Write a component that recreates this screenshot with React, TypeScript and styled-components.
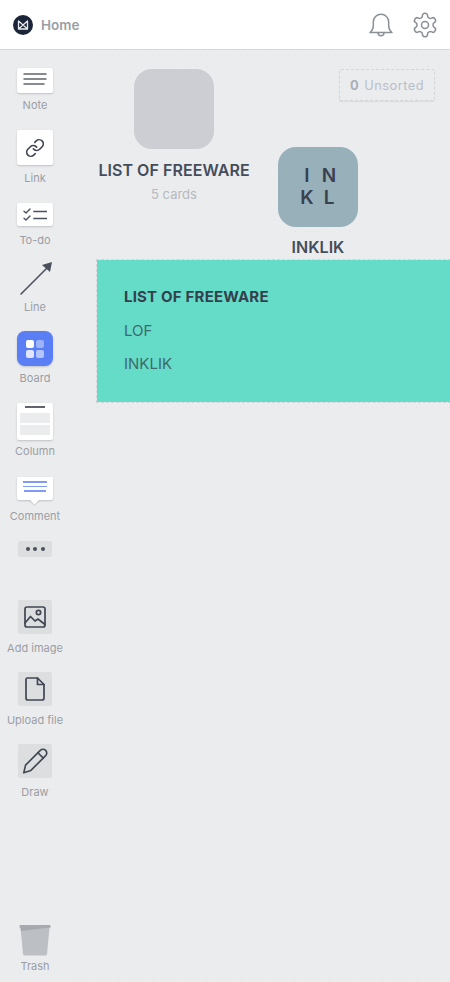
import React from "react";
import styled, { createGlobalStyle } from "styled-components";

const Global = createGlobalStyle`
  html, body { margin: 0; padding: 0; height: 100%; background: #ebecee; }
  body { font-family: Inter, "Liberation Sans", sans-serif; overflow: hidden; }
  #root { height: 100%; }
`;

const Page = styled.div`
  width: 450px;
  height: 982px;
  display: flex;
  flex-direction: column;
  overflow: hidden;
  background: #ebecee;
`;

const Header = styled.header`
  height: 49px;
  flex: none;
  display: flex;
  align-items: center;
  justify-content: space-between;
  background: #fff;
  border-bottom: 1px solid #d6d8da;
  padding: 0 11px 0 13px;
`;

const Brand = styled.div`
  display: flex;
  align-items: center;
  gap: 8px;
`;

const Logo = styled.svg`
  width: 20px;
  height: 20px;
  display: block;
`;

const HomeText = styled.span`
  font-size: 13.5px;
  font-weight: 600;
  color: #9a9ea5;
`;

const HeaderIcons = styled.div`
  display: flex;
  align-items: center;
  gap: 17px;
`;

const Body = styled.div`
  flex: 1;
  display: flex;
  min-height: 0;
`;

const Sidebar = styled.nav`
  width: 70px;
  flex: none;
  display: flex;
  flex-direction: column;
  align-items: center;
  padding: 18px 0 8px;
  box-sizing: border-box;
`;

const Tool = styled.div<{ $top: number }>`
  display: flex;
  flex-direction: column;
  align-items: center;
  margin-top: ${(p) => p.$top}px;
`;

const Label = styled.span<{ $gap: number }>`
  font-size: 11px;
  line-height: 14px;
  color: #9b9ea4;
  margin-top: ${(p) => p.$gap}px;
  margin-bottom: 1px;
  white-space: nowrap;
`;

const PaperIcon = styled.div<{ $h: number }>`
  width: 36px;
  height: ${(p) => p.$h}px;
  background: #fff;
  border-radius: 2px;
  box-shadow: 0 1px 2px rgba(90, 95, 105, 0.3);
  display: flex;
  align-items: center;
  justify-content: center;
`;

const BoardIcon = styled.div`
  width: 36px;
  height: 35px;
  border-radius: 8px;
  background: #5a7ff5;
  box-shadow: 0 1px 2px rgba(90, 95, 105, 0.3);
  display: grid;
  grid-template-columns: 8px 8px;
  grid-auto-rows: 8px;
  gap: 2px;
  align-content: center;
  justify-content: center;
`;

const BoardCell = styled.span<{ $alpha: number }>`
  border-radius: 2px;
  background: rgba(255, 255, 255, ${(p) => p.$alpha});
`;

const ColumnIcon = styled.div`
  width: 36px;
  height: 37px;
  background: #fff;
  border-radius: 2px;
  box-shadow: 0 1px 2px rgba(90, 95, 105, 0.3);
  display: flex;
  flex-direction: column;
  align-items: center;
  padding-top: 3px;
  box-sizing: border-box;
`;

const ColumnBar = styled.span`
  width: 20px;
  height: 2px;
  background: #5f646e;
  margin-bottom: 5px;
`;

const ColumnSlot = styled.span`
  width: 30px;
  height: 10px;
  background: #ebecee;
  margin-bottom: 2px;
`;

const CommentIcon = styled.div`
  position: relative;
  width: 36px;
  height: 23px;
  background: #fff;
  border-radius: 0 0 2px 2px;
  box-shadow: 0 1px 2px rgba(90, 95, 105, 0.3);
  display: flex;
  flex-direction: column;
  align-items: center;
  gap: 3px;
  padding-top: 4px;
  box-sizing: border-box;
  &::after {
    content: "";
    position: absolute;
    left: 14.5px;
    bottom: -3px;
    width: 7px;
    height: 7px;
    background: #fff;
    transform: rotate(45deg);
    box-shadow: 1px 1px 1px rgba(90, 95, 105, 0.2);
  }
`;

const CommentLine = styled.span<{ $w: number }>`
  width: ${(p) => p.$w}px;
  height: 1.5px;
  background: #7f9bf5;
`;

const MoreButton = styled.div`
  width: 34px;
  height: 16px;
  background: #dcdee0;
  border-radius: 2px;
  display: flex;
  align-items: center;
  justify-content: center;
  gap: 3.5px;
`;

const Dot = styled.span`
  width: 4px;
  height: 4px;
  border-radius: 50%;
  background: #4a505c;
`;

const GreyTile = styled.div`
  width: 34px;
  height: 34px;
  background: #dcdee0;
  border-radius: 2px;
  display: flex;
  align-items: center;
  justify-content: center;
`;

const Spacer = styled.div`
  flex: 1;
`;

const Canvas = styled.main`
  position: relative;
  flex: 1;
  background-image: radial-gradient(circle, #e1e2e5 0.7px, transparent 1px);
  background-size: 11px 11px;
`;

const UnsortedTag = styled.div`
  position: absolute;
  left: 269px;
  top: 19px;
  width: 96px;
  height: 32px;
  box-sizing: border-box;
  border: 1px dashed #d3d5d8;
  border-radius: 2px;
  box-shadow: 0 1px 1px rgba(90, 95, 105, 0.12);
  display: flex;
  align-items: center;
  justify-content: center;
  gap: 5px;
  font-size: 12.8px;
  letter-spacing: 0.5px;
  color: #b9bfca;
`;

const Strong = styled.b`
  font-weight: 700;
  color: #a9afb9;
`;

const BoardNode = styled.div<{ $x: number; $y: number; $w: number }>`
  position: absolute;
  left: ${(p) => p.$x}px;
  top: ${(p) => p.$y}px;
  width: ${(p) => p.$w}px;
  display: flex;
  flex-direction: column;
  align-items: center;
`;

const Tile = styled.div<{ $bg: string }>`
  width: 80px;
  height: 80px;
  border-radius: 18px;
  background: ${(p) => p.$bg};
  display: flex;
  align-items: center;
  justify-content: center;
`;

const TileLetters = styled.div`
  display: grid;
  grid-template-columns: 22px 22px;
  grid-auto-rows: 22px;
  font-size: 19px;
  line-height: 22px;
  font-weight: 600;
  text-align: center;
  color: #3a4150;
`;

const NodeTitle = styled.div<{ $top: number }>`
  margin-top: ${(p) => p.$top}px;
  font-size: 16px;
  line-height: 20px;
  font-weight: 600;
  letter-spacing: 0.05px;
  color: #454c5a;
  white-space: nowrap;
`;

const NodeSub = styled.div`
  margin-top: 6px;
  font-size: 13px;
  line-height: 16px;
  color: #b6b9be;
`;

const TextCard = styled.section`
  position: absolute;
  left: 27px;
  top: 210px;
  width: 353px;
  height: 142px;
  box-sizing: border-box;
  padding: 27px 27px 0;
  background: #64dcc8;
  outline: 1px dashed #d3d6d9;
  display: flex;
  flex-direction: column;
  gap: 13.5px;
`;

const CardLine = styled.div<{ $bold?: boolean }>`
  font-size: 15px;
  line-height: 20px;
  font-weight: ${(p) => (p.$bold ? 700 : 400)};
  letter-spacing: ${(p) => (p.$bold ? "0.2px" : "0")};
  color: ${(p) => (p.$bold ? "#34404c" : "#3f6a6c")};
`;

const lines = (stroke: string) => ({
  fill: "none",
  stroke,
  strokeLinecap: "round" as const,
  strokeLinejoin: "round" as const,
});

export default function App() {
  return (
    <Page>
      <Global />
      <Header>
        <Brand>
          <Logo viewBox="0 0 20 20">
            <circle cx="10" cy="10" r="10" fill="#1b2438" />
            <path d="M5.5 6 L10 10 L14.5 6 V14 H5.5 Z M5.5 14 L10 10 L14.5 14" {...lines("#e8eaee")} strokeWidth="1.3" />
          </Logo>
          <HomeText>Home</HomeText>
        </Brand>
        <HeaderIcons>
          <svg width="26" height="26" viewBox="0 0 26 26" {...lines("#8b8f96")} strokeWidth="1.5">
            <path d="M2 20.5c2.4-1.8 3.3-3.6 3.3-7.2V10a7.7 7.7 0 0 1 15.4 0v3.3c0 3.6.9 5.4 3.3 7.2Z" />
            <path d="M10 20.5c0 4.4 6 4.4 6 0" />
          </svg>
          <svg width="28" height="28" viewBox="0 0 24 24" {...lines("#8b8f96")} strokeWidth="1.3">
            <path d="M12.22 2h-.44a2 2 0 0 0-2 2v.18a2 2 0 0 1-1 1.73l-.43.25a2 2 0 0 1-2 0l-.15-.08a2 2 0 0 0-2.73.73l-.22.38a2 2 0 0 0 .73 2.73l.15.1a2 2 0 0 1 1 1.72v.51a2 2 0 0 1-1 1.74l-.15.09a2 2 0 0 0-.73 2.73l.22.38a2 2 0 0 0 2.73.73l.15-.08a2 2 0 0 1 2 0l.43.25a2 2 0 0 1 1 1.73V20a2 2 0 0 0 2 2h.44a2 2 0 0 0 2-2v-.18a2 2 0 0 1 1-1.73l.43-.25a2 2 0 0 1 2 0l.15.08a2 2 0 0 0 2.73-.73l.22-.39a2 2 0 0 0-.73-2.73l-.15-.08a2 2 0 0 1-1-1.74v-.5a2 2 0 0 1 1-1.74l.15-.09a2 2 0 0 0 .73-2.73l-.22-.38a2 2 0 0 0-2.73-.73l-.15.08a2 2 0 0 1-2 0l-.43-.25a2 2 0 0 1-1-1.73V4a2 2 0 0 0-2-2z" />
            <circle cx="12" cy="12" r="3" />
          </svg>
        </HeaderIcons>
      </Header>
      <Body>
        <Sidebar>
          <Tool $top={0}>
            <PaperIcon $h={25}>
              <svg width="24" height="18" viewBox="0 0 24 18" {...lines("#5f646e")} strokeWidth="1.5">
                <path d="M0.5 2h23M0.5 7h23M0.5 12h21" strokeLinecap="butt" />
              </svg>
            </PaperIcon>
            <Label $gap={5}>Note</Label>
          </Tool>
          <Tool $top={17}>
            <PaperIcon $h={35}>
              <svg width="20" height="20" viewBox="0 0 24 24" {...lines("#3f4552")} strokeWidth="2">
                <path d="M10 13a5 5 0 0 0 7.54.54l3-3a5 5 0 0 0-7.07-7.07l-1.72 1.71" />
                <path d="M14 11a5 5 0 0 0-7.54-.54l-3 3a5 5 0 0 0 7.07 7.07l1.71-1.71" />
              </svg>
            </PaperIcon>
            <Label $gap={6}>Link</Label>
          </Tool>
          <Tool $top={17}>
            <PaperIcon $h={23}>
              <svg width="24" height="14" viewBox="0 0 24 14" {...lines("#4b515d")} strokeWidth="1.4">
                <path d="M1 3.2l2 1.8L7 1M1 10.2l2 1.8 4-4" />
                <path d="M10.3 3.5h13.7M10.3 10.5h13.7" strokeLinecap="butt" />
              </svg>
            </PaperIcon>
            <Label $gap={7}>To-do</Label>
          </Tool>
          <Tool $top={13}>
            <svg width="35" height="35" viewBox="0 0 35 35">
              <path d="M3 33 L30 6" stroke="#4a505c" strokeWidth="1.6" strokeLinecap="round" />
              <path d="M34 1 L32 11 L24 4 Z" fill="#4a505c" />
            </svg>
            <Label $gap={4}>Line</Label>
          </Tool>
          <Tool $top={16}>
            <BoardIcon>
              <BoardCell $alpha={1} />
              <BoardCell $alpha={0.4} />
              <BoardCell $alpha={0.8} />
              <BoardCell $alpha={0.55} />
            </BoardIcon>
            <Label $gap={5}>Board</Label>
          </Tool>
          <Tool $top={17}>
            <ColumnIcon>
              <ColumnBar />
              <ColumnSlot />
              <ColumnSlot />
            </ColumnIcon>
            <Label $gap={4}>Column</Label>
          </Tool>
          <Tool $top={18}>
            <CommentIcon>
              <CommentLine $w={24} />
              <CommentLine $w={24} />
              <CommentLine $w={22} />
            </CommentIcon>
            <Label $gap={9}>Comment</Label>
          </Tool>
          <Tool $top={17}>
            <MoreButton>
              <Dot />
              <Dot />
              <Dot />
            </MoreButton>
          </Tool>
          <Tool $top={43}>
            <GreyTile>
              <svg width="22" height="22" viewBox="0 0 22 22" {...lines("#414753")} strokeWidth="1.7">
                <rect x="1" y="1" width="20" height="20" rx="2" />
                <circle cx="14.5" cy="6.5" r="2.2" />
                <path d="M1 17l5.5-6.5 4.5 4.5 3-2 7 5.5" />
              </svg>
            </GreyTile>
            <Label $gap={7}>Add image</Label>
          </Tool>
          <Tool $top={16}>
            <GreyTile>
              <svg width="22" height="24" viewBox="0 0 22 24" {...lines("#414753")} strokeWidth="1.7">
                <path d="M3.5 1h10L20 7.5v13.5a2 2 0 0 1-2 2H4a2 2 0 0 1-2-2V2.5A1.5 1.5 0 0 1 3.5 1z" />
                <path d="M13.5 1v6.5H20" />
              </svg>
            </GreyTile>
            <Label $gap={7}>Upload file</Label>
          </Tool>
          <Tool $top={16}>
            <GreyTile>
              <svg width="26" height="26" viewBox="2 2 22 22" {...lines("#414753")} strokeWidth="1.4">
                <path d="M3.5 23l1.5-6.5L17.5 4a2.5 2.5 0 0 1 4.5 4.5L9.5 21Z" />
                <path d="M15.5 6l4.5 4.5" />
              </svg>
            </GreyTile>
            <Label $gap={7}>Draw</Label>
          </Tool>
          <Spacer />
          <Tool $top={0}>
            <svg width="32" height="32" viewBox="0 0 32 32">
              <path d="M0.5 1h31v3l-1 0L28 30a2 2 0 0 1-2 1.5H6a2 2 0 0 1-2-1.5L1.5 4l-1 0Z" fill="#bcbfc3" />
              <path d="M1 1h30v2.5L2 7Z" fill="#a6a9ae" />
            </svg>
            <Label $gap={3}>Trash</Label>
          </Tool>
        </Sidebar>
        <Canvas>
          <UnsortedTag>
            <Strong>0</Strong>
            <span>Unsorted</span>
          </UnsortedTag>
          <BoardNode $x={4} $y={19} $w={200}>
            <Tile $bg="#ccced3" />
            <NodeTitle $top={11}>LIST OF FREEWARE</NodeTitle>
            <NodeSub>5 cards</NodeSub>
          </BoardNode>
          <BoardNode $x={148} $y={97} $w={200}>
            <Tile $bg="#97b0ba">
              <TileLetters>
                <span>I</span>
                <span>N</span>
                <span>K</span>
                <span>L</span>
              </TileLetters>
            </Tile>
            <NodeTitle $top={10}>INKLIK</NodeTitle>
          </BoardNode>
          <TextCard>
            <CardLine $bold>LIST OF FREEWARE</CardLine>
            <CardLine>LOF</CardLine>
            <CardLine>INKLIK</CardLine>
          </TextCard>
        </Canvas>
      </Body>
    </Page>
  );
}
